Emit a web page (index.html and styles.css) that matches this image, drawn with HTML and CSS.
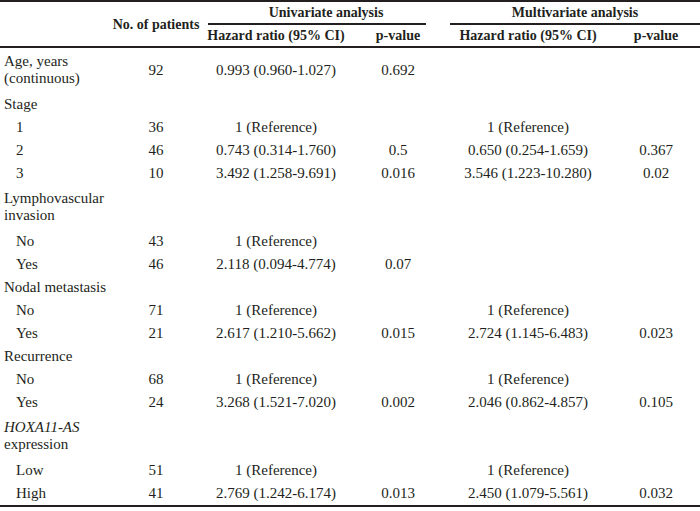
FILE: index.html
```html
<!DOCTYPE html>
<html>
<head>
<meta charset="utf-8">
<link rel="stylesheet" href="styles.css">
</head>
<body>
<table class="tbl">
  <colgroup>
    <col class="c-label">
    <col class="c-n">
    <col class="c-uhr">
    <col class="c-up">
    <col class="c-mhr">
    <col class="c-mp">
  </colgroup>
  <thead>
    <tr>
      <th rowspan="2" class="h-label"></th>
      <th rowspan="2" class="h-n">No. of patients</th>
      <th colspan="2" class="h-group h-uni"><div class="rule rule-uni">Univariate analysis</div></th>
      <th colspan="2" class="h-group h-multi"><div class="rule rule-multi">Multivariate analysis</div></th>
    </tr>
    <tr>
      <th class="h-sub">Hazard ratio (95% CI)</th>
      <th class="h-sub">p-value</th>
      <th class="h-sub">Hazard ratio (95% CI)</th>
      <th class="h-sub">p-value</th>
    </tr>
  </thead>
  <tbody>
    <tr class="tall"><td class="lab">Age, years (continuous)</td><td>92</td><td>0.993 (0.960-1.027)</td><td>0.692</td><td></td><td></td></tr>
    <tr><td class="lab">Stage</td><td></td><td></td><td></td><td></td><td></td></tr>
    <tr><td class="lab sub">1</td><td>36</td><td>1 (Reference)</td><td></td><td>1 (Reference)</td><td></td></tr>
    <tr><td class="lab sub">2</td><td>46</td><td>0.743 (0.314-1.760)</td><td>0.5</td><td>0.650 (0.254-1.659)</td><td>0.367</td></tr>
    <tr><td class="lab sub">3</td><td>10</td><td>3.492 (1.258-9.691)</td><td>0.016</td><td>3.546 (1.223-10.280)</td><td>0.02</td></tr>
    <tr class="tall"><td class="lab">Lymphovascular invasion</td><td></td><td></td><td></td><td></td><td></td></tr>
    <tr><td class="lab sub">No</td><td>43</td><td>1 (Reference)</td><td></td><td></td><td></td></tr>
    <tr><td class="lab sub">Yes</td><td>46</td><td>2.118 (0.094-4.774)</td><td>0.07</td><td></td><td></td></tr>
    <tr><td class="lab">Nodal metastasis</td><td></td><td></td><td></td><td></td><td></td></tr>
    <tr><td class="lab sub">No</td><td>71</td><td>1 (Reference)</td><td></td><td>1 (Reference)</td><td></td></tr>
    <tr><td class="lab sub">Yes</td><td>21</td><td>2.617 (1.210-5.662)</td><td>0.015</td><td>2.724 (1.145-6.483)</td><td>0.023</td></tr>
    <tr><td class="lab">Recurrence</td><td></td><td></td><td></td><td></td><td></td></tr>
    <tr><td class="lab sub">No</td><td>68</td><td>1 (Reference)</td><td></td><td>1 (Reference)</td><td></td></tr>
    <tr><td class="lab sub">Yes</td><td>24</td><td>3.268 (1.521-7.020)</td><td>0.002</td><td>2.046 (0.862-4.857)</td><td>0.105</td></tr>
    <tr class="tall"><td class="lab"><i>HOXA11-AS</i> expression</td><td></td><td></td><td></td><td></td><td></td></tr>
    <tr><td class="lab sub">Low</td><td>51</td><td>1 (Reference)</td><td></td><td>1 (Reference)</td><td></td></tr>
    <tr><td class="lab sub">High</td><td>41</td><td>2.769 (1.242-6.174)</td><td>0.013</td><td>2.450 (1.079-5.561)</td><td>0.032</td></tr>
  </tbody>
</table>
</body>
</html>
```

FILE: styles.css
```css
html, body {
  margin: 0;
  padding: 0;
  background: #ffffff;
}

body {
  font-family: "Liberation Serif", "Times New Roman", serif;
  color: #231f20;
}

.tbl {
  width: 700px;
  table-layout: fixed;
  border-collapse: separate;
  border-spacing: 0;
  border-top: 2px solid #231f20;
  border-bottom: 2px solid #231f20;
}

.c-label { width: 112px; }
.c-n { width: 88px; }
.c-uhr { width: 152px; }
.c-up { width: 92px; }
.c-mhr { width: 168px; }
.c-mp { width: 88px; }

th {
  font-size: 14px;
  font-weight: bold;
  line-height: 17px;
  text-align: center;
  vertical-align: middle;
  padding: 0;
}

.h-label,
.h-n,
.h-sub {
  border-bottom: 2px solid #231f20;
}

.h-group {
  padding-top: 2px;
}

.h-uni {
  padding-left: 8px;
}

.rule {
  padding-bottom: 2px;
  border-bottom: 2px solid #231f20;
}

.rule-uni {
  margin-right: 18px;
  padding-right: 0;
}

.rule-uni {
  text-indent: 18px;
}

.h-multi {
  padding-left: 6px;
}

.h-sub {
  padding: 2px 0;
}

td {
  font-size: 15px;
  line-height: 17px;
  text-align: center;
  vertical-align: middle;
  padding: 3px 0;
}

.tall td {
  padding: 5px 0 6px;
}

td.lab {
  text-align: left;
  padding-left: 4px;
}

td.lab.sub {
  padding-left: 16px;
}
```
